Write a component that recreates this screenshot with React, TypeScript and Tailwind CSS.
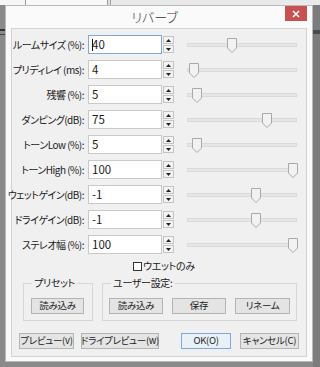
const rows = [
  { label: 'ルームサイズ (%):', value: '40', thumb: 40, focus: true },
  { label: 'プリディレイ (ms):', value: '4', thumb: 2 },
  { label: '残響 (%):', value: '5', thumb: 5 },
  { label: 'ダンピング(dB):', value: '75', thumb: 75 },
  { label: 'トーンLow (%):', value: '5', thumb: 5 },
  { label: 'トーンHigh (%):', value: '100', thumb: 101 },
  { label: 'ウェットゲイン(dB):', value: '-1', thumb: 64 },
  { label: 'ドライゲイン(dB):', value: '-1', thumb: 64 },
  { label: 'ステレオ幅 (%):', value: '100', thumb: 101 },
]

function Spinner() {
  return (
    <div className="flex flex-col w-[11px] h-[17px] gap-[1px]">
      <div className="flex-1 flex items-center justify-center border border-[#c4c4c4] bg-[#f3f3f3]">
        <svg width="5" height="3" viewBox="0 0 5 3"><path d="M2.5 0 L5 3 H0 Z" fill="#222" /></svg>
      </div>
      <div className="flex-1 flex items-center justify-center border border-[#c4c4c4] bg-[#f3f3f3]">
        <svg width="5" height="3" viewBox="0 0 5 3"><path d="M0 0 H5 L2.5 3 Z" fill="#222" /></svg>
      </div>
    </div>
  )
}

function Slider({ pos }: { pos: number }) {
  return (
    <div className="relative w-[110px] h-[16px] flex items-center">
      <div className="w-full h-[4px] bg-[#e6e6e6] border border-[#dadada]" />
      <svg
        className="absolute top-[1px]"
        style={{ left: pos }}
        width="10"
        height="15"
        viewBox="0 0 10 15"
      >
        <path d="M0.5 0.5 H9.5 V10 L5 14.5 L0.5 10 Z" fill="#f2f2f2" stroke="#a9a9a9" />
      </svg>
    </div>
  )
}

function Btn({ children, w, primary }: { children: React.ReactNode; w: string; primary?: boolean }) {
  return (
    <div
      className={`${w} h-[16px] flex items-center justify-center whitespace-nowrap text-[9.5px] tracking-[-0.3px] leading-none text-[#222] border ${
        primary ? 'border-[#7fa9d6] bg-[#e8f0f8]' : 'border-[#b4b4b4] bg-[#e4e4e4]'
      }`}
    >
      {children}
    </div>
  )
}

export default function App() {
  return (
    <div className="w-[320px] h-[367px] overflow-hidden bg-[#8a8a8a] flex flex-col font-['Noto_Sans_CJK_JP',sans-serif] [font-feature-settings:'palt'] text-[#1a1a1a]">
      {/* tab strip behind the dialog */}
      <div className="h-[5px] flex bg-[#e9e9e9] shrink-0">
        <div className="w-[26px] bg-[#f6f6f6] border-r border-[#9a9a9a]" />
        <div className="w-[82px] bg-[#f8f8f8] border-r border-[#9a9a9a]" />
        <div className="w-[3px] bg-[#e0e0e0] border-r border-[#a0a0a0]" />
      </div>

      <div className="flex flex-1">
        <div className="w-[5px] bg-[#8a8a8a] flex flex-col pt-[24px] gap-[3px]">
          <div className="h-[2px] bg-[#333]" />
          <div className="h-[1px] bg-[#444]" />
        </div>

        {/* dialog */}
        <div className="w-[308px] h-[357px] bg-[#fafafa] border border-[#b9b9b9] flex flex-col">
          <div className="h-[22px] flex items-start shrink-0">
            <div className="flex-1 h-full flex items-center justify-center pl-[18px] text-[13px] font-light text-[#333]">
              リバーブ
            </div>
            <div className="w-[22px] h-[15px] bg-[#c75050] flex items-center justify-center mr-[5px]">
              <svg width="8" height="8" viewBox="0 0 8 8">
                <path d="M1 1 L7 7 M7 1 L1 7" stroke="#fff" strokeWidth="1.6" />
              </svg>
            </div>
          </div>

          {/* client area */}
          <div className="ml-[5px] w-[296px] h-[329px] bg-[#f0f0f0] border border-[#d3d3d3] flex flex-col pt-[3px]">
            {rows.map((r) => (
              <div key={r.label} className="h-[25px] flex items-center">
                <div className="w-[72px] flex justify-end whitespace-nowrap text-[10px] tracking-[-0.5px] leading-none">
                  <span className="shrink-0">{r.label}</span>
                </div>
                <div
                  className={`ml-[4px] w-[74px] h-[19px] bg-white border flex items-center pl-[3px] text-[11.5px] leading-none ${
                    r.focus ? 'border-[#7eaad8]' : 'border-[#c9c9c9]'
                  }`}
                >
                  {r.focus && <span className="w-[1px] h-[12px] bg-[#111] mr-[-1px]" />}
                  {r.value}
                </div>
                <div className="ml-[1px]">
                  <Spinner />
                </div>
                <div className="ml-[13px]">
                  <Slider pos={r.thumb} />
                </div>
              </div>
            ))}

            <div className="h-[18px] flex items-center pl-[121px]">
              <div className="w-[9px] h-[9px] bg-white border border-[#333]" />
              <span className="ml-[1px] text-[10px] tracking-[-0.3px] leading-none">ウエットのみ</span>
            </div>

            <div className="flex mt-[1px] pl-[11px] gap-[9px]">
              <fieldset className="w-[70px] border border-[#d6d6d6] px-[7px] pt-[8px] pb-[6px]">
                <legend className="ml-[1px] px-[2px] text-[10px] tracking-[-0.3px] leading-[14px]">プリセット</legend>
                <Btn w="w-[53px]">読み込み</Btn>
              </fieldset>
              <fieldset className="w-[195px] border border-[#d6d6d6] pl-[6px] pt-[8px] pb-[6px] flex">
                <legend className="ml-[2px] px-[2px] text-[10px] tracking-[-0.3px] leading-[14px]">ユーザー設定:</legend>
                <div className="flex gap-[9px]">
                  <Btn w="w-[54px]">読み込み</Btn>
                  <Btn w="w-[54px]">保存</Btn>
                  <Btn w="w-[55px]">リネーム</Btn>
                </div>
              </fieldset>
            </div>

            <div className="flex mt-[12px] pl-[7px]">
              <Btn w="w-[55px]">プレビュー(v)</Btn>
              <div className="ml-[7px]">
                <Btn w="w-[78px]">ドライプレビュー(w)</Btn>
              </div>
              <div className="ml-[22px]">
                <Btn w="w-[50px]" primary>OK(O)</Btn>
              </div>
              <div className="ml-[9px]">
                <Btn w="w-[59px]">キャンセル(C)</Btn>
              </div>
            </div>
          </div>
        </div>

        <div className="flex-1 bg-[#7c7c7c] flex flex-col pt-[25px]">
          <div className="h-[4px] bg-[#4a4a4a]" />
        </div>
      </div>
    </div>
  )
}
